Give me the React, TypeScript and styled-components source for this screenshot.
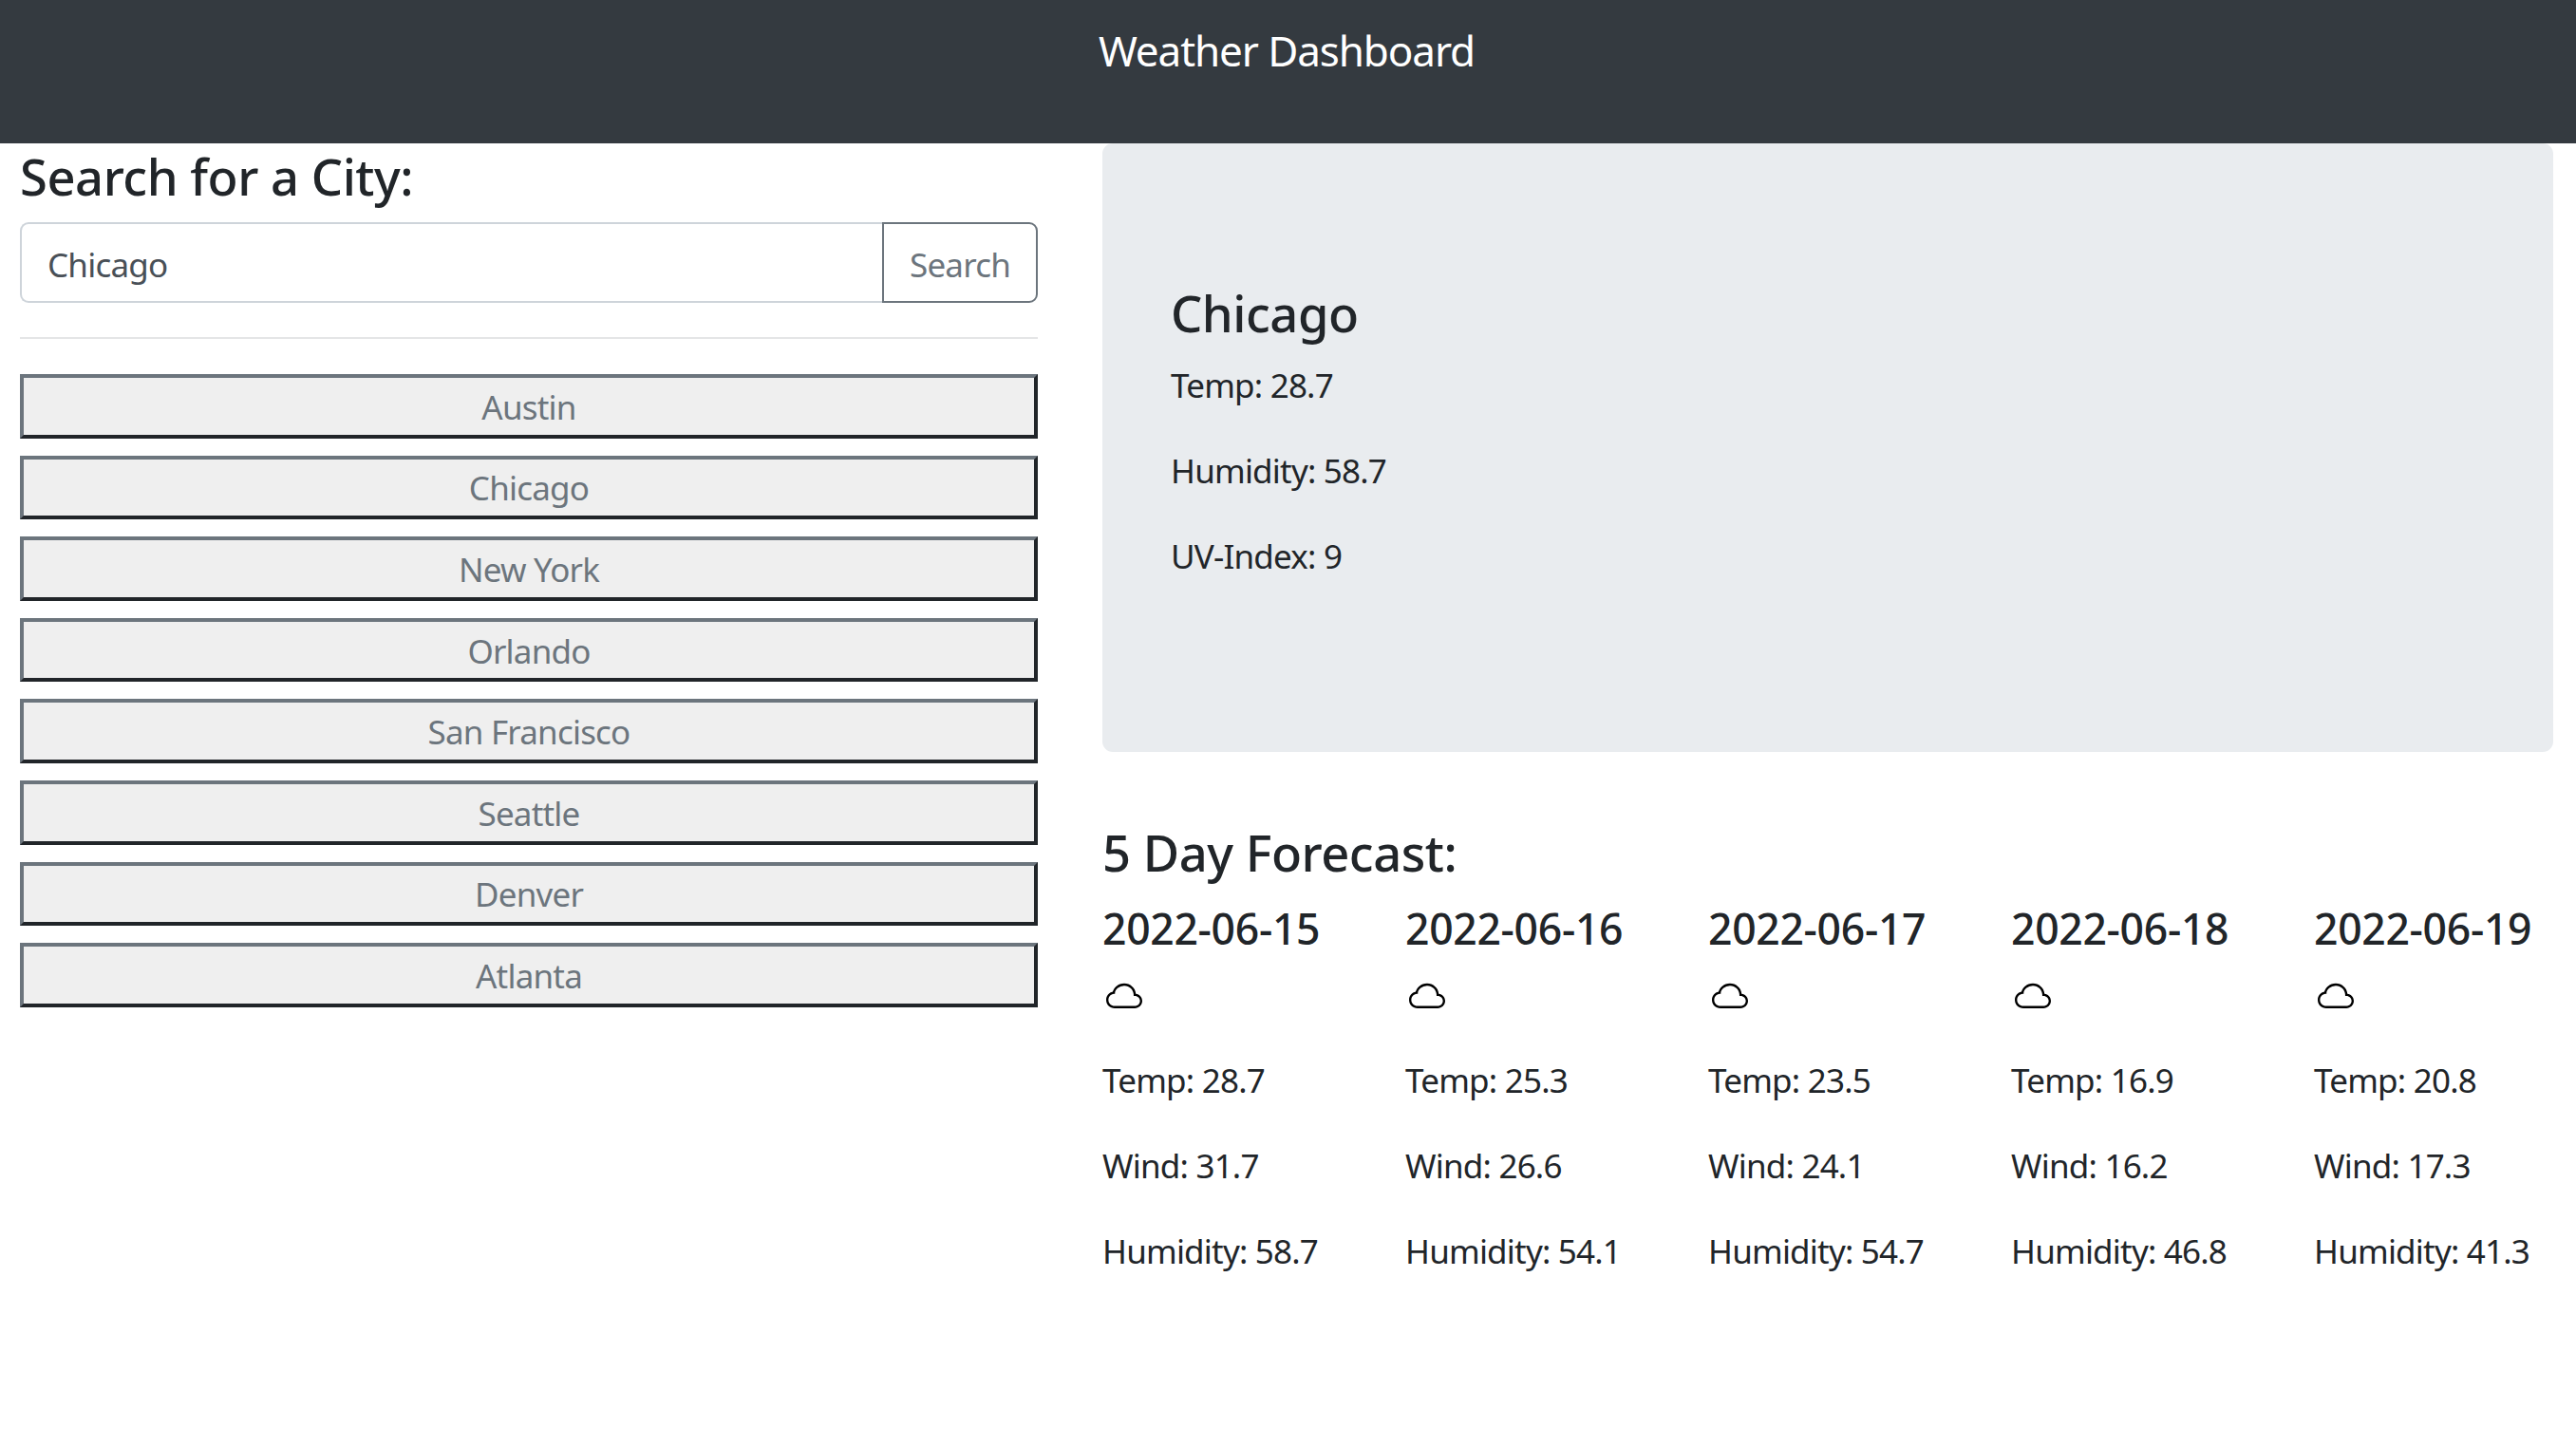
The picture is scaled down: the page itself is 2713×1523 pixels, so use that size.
import React from "react";
import styled, { createGlobalStyle } from "styled-components";
import { BsCloud } from "react-icons/bs";

const cities = ["Austin", "Chicago", "New York", "Orlando", "San Francisco", "Seattle", "Denver", "Atlanta"];

const forecast = [
  { date: "2022-06-15", temp: 28.7, wind: 31.7, humidity: 58.7 },
  { date: "2022-06-16", temp: 25.3, wind: 26.6, humidity: 54.1 },
  { date: "2022-06-17", temp: 23.5, wind: 24.1, humidity: 54.7 },
  { date: "2022-06-18", temp: 16.9, wind: 16.2, humidity: 46.8 },
  { date: "2022-06-19", temp: 20.8, wind: 17.3, humidity: 41.3 },
];

const GlobalStyle = createGlobalStyle`
  * { box-sizing: border-box; }
  body {
    margin: 0;
    background: #fff;
    color: #212529;
    font-family: "Noto Sans", "Open Sans", sans-serif;
    font-size: 35px;
    letter-spacing: -0.8px;
    line-height: 54px;
    overflow-x: hidden;
  }
`;

const Navbar = styled.header`
  height: 151px;
  background: #343a40;
  color: #fff;
  font-size: 44px;
  letter-spacing: -1.1px;
  line-height: 54px;
  text-align: center;
  padding: 26px 3px 0 0;
`;

const Main = styled.main`
  display: grid;
  grid-template-columns: 1072px 1528px;
  column-gap: 68px;
  padding-left: 21px;
`;

const Heading = styled.h3`
  margin: 0 0 16.5px;
  padding-top: 1.5px;
  font-size: 52.5px;
  font-weight: 500;
  letter-spacing: -0.47px;
  line-height: 65px;
`;

const SearchForm = styled.form`
  display: flex;
  height: 85px;
`;

const SearchInput = styled.input`
  flex: 1;
  min-width: 0;
  padding: 5px 27px 0;
  border: 2px solid #ced4da;
  border-right: 0;
  border-radius: 9px 0 0 9px;
  color: #495057;
  font: inherit;
  letter-spacing: inherit;
`;

const SearchButton = styled.button`
  width: 164px;
  padding: 5px 0 0;
  background: #fff;
  border: 2px solid #6c757d;
  border-radius: 0 9px 9px 0;
  color: #6c757d;
  font: inherit;
  letter-spacing: inherit;
`;

const Divider = styled.hr`
  height: 2px;
  margin: 36px 0 37px;
  border: 0;
  background: #e4e5e6;
`;

const CityList = styled.div`
  display: flex;
  flex-direction: column;
  gap: 18px;
`;

const CityButton = styled.button`
  height: 67.6px;
  padding: 2px 0 0;
  background: #efefef;
  border-style: solid;
  border-width: 4px;
  border-color: #6c757d #212529 #212529 #6c757d;
  color: #6c757d;
  font: inherit;
  letter-spacing: inherit;
`;

const CurrentPanel = styled.section`
  margin-bottom: 72px;
  padding: 144px 72px;
  background: #e9ecef;
  border-radius: 11px;
`;

const Stat = styled.p`
  margin: 0 0 35.2px;
  padding-top: 0.8px;
  white-space: nowrap;
`;

const ForecastGrid = styled.div`
  display: grid;
  grid-template-columns: repeat(5, 229px);
  column-gap: 90px;
`;

const DayTitle = styled.h4`
  margin: 0 0 27px;
  padding-top: 4px;
  font-size: 44.5px;
  font-weight: 500;
  letter-spacing: -0.3px;
  line-height: 54px;
  white-space: nowrap;
`;

const CloudIcon = styled(BsCloud)`
  display: block;
  width: 38px;
  height: 38px;
  margin: -1px 0 41.3px 4px;
  color: #000;
`;

export default function App() {
  return (
    <>
      <GlobalStyle />
      <Navbar>Weather Dashboard</Navbar>
      <Main>
        <div>
          <Heading>Search for a City:</Heading>
          <SearchForm>
            <SearchInput defaultValue="Chicago" />
            <SearchButton type="button">Search</SearchButton>
          </SearchForm>
          <Divider />
          <CityList>
            {cities.map((city) => (
              <CityButton key={city}>{city}</CityButton>
            ))}
          </CityList>
        </div>
        <div>
          <CurrentPanel>
            <Heading>Chicago</Heading>
            <Stat>Temp: 28.7</Stat>
            <Stat>Humidity: 58.7</Stat>
            <Stat>UV-Index: 9</Stat>
          </CurrentPanel>
          <Heading>5 Day Forecast:</Heading>
          <ForecastGrid>
            {forecast.map((day) => (
              <div key={day.date}>
                <DayTitle>{day.date}</DayTitle>
                <CloudIcon />
                <Stat>Temp: {day.temp}</Stat>
                <Stat>Wind: {day.wind}</Stat>
                <Stat>Humidity: {day.humidity}</Stat>
              </div>
            ))}
          </ForecastGrid>
        </div>
      </Main>
    </>
  );
}
